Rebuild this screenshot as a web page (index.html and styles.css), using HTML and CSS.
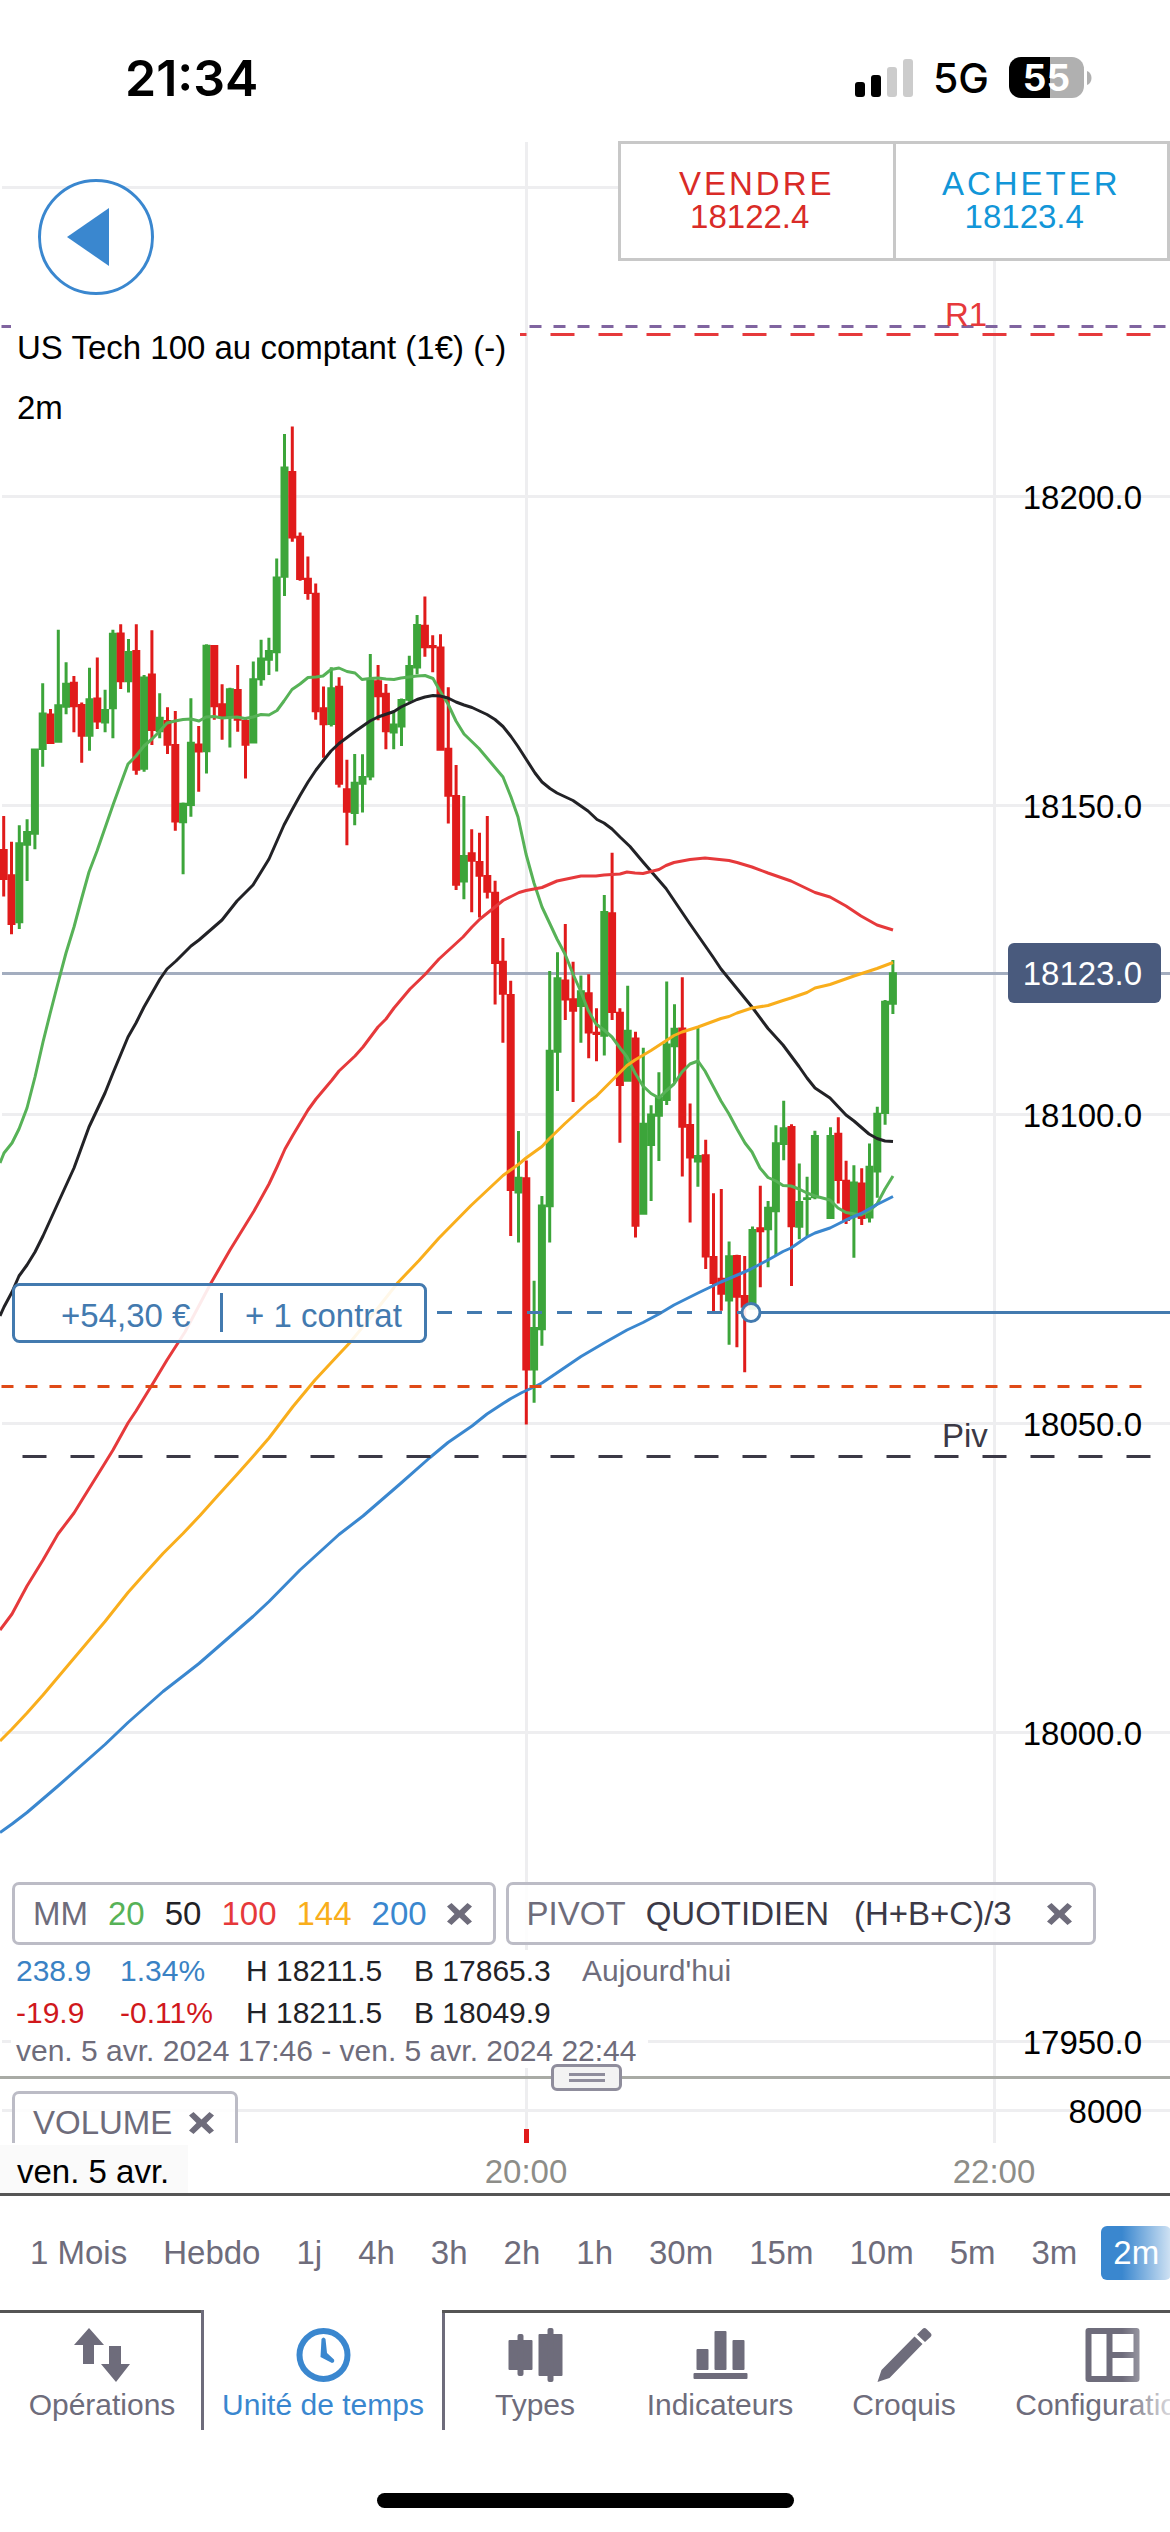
FILE: index.html
```html
<!DOCTYPE html>
<html lang="fr">
<head>
<meta charset="utf-8">
<meta name="viewport" content="width=device-width, initial-scale=1">
<title>US Tech 100 au comptant (1€)</title>
<link rel="stylesheet" href="styles.css">
</head>
<body>
<svg class="defs" aria-hidden="true">
  <symbol id="cross" viewBox="0 0 25 22"><path d="M0 3.500 4.500 0l8 7.500L20.500 0 25 3.500 17.500 11l7.500 7.500-4.500 3.500-8-7.500L4.500 22 0 18.500 7.500 11z"/></symbol>
</svg>
<div class="app">
  <header class="status">
    <span class="clock">21:34</span>
    <div class="status-right">
      <svg class="signal" viewBox="0 0 58 38" aria-hidden="true">
        <rect x="0" y="23" width="10" height="15" rx="3"/>
        <rect x="16" y="16" width="10" height="22" rx="3"/>
        <rect class="off" x="32" y="8" width="10" height="30" rx="3"/>
        <rect class="off" x="48" y="0" width="10" height="38" rx="3"/>
      </svg>
      <span class="network">5G</span>
      <span class="battery"><span class="battery-level">55</span><svg class="battery-cap" viewBox="0 0 5 14" aria-hidden="true"><path d="M0 0c6 2 6 12 0 14z"/></svg></span>
    </div>
  </header>

  <main>
    <section class="pane">
      <svg class="plot" viewBox="0 141 1170 1935" role="img" aria-label="Graphique en chandeliers, 2 minutes">
        <path class="grid" d="M2 187.500H1170M2 496.500H1170M2 805.500H1170M2 1114.500H1170M2 1423.500H1170M2 1732.500H1170M2 2041.500H1170M526.500 142V2076M994.500 142V2076"/>
        <path class="last-line" d="M2 973.500H1170"/>
        <g id="candles"></g>
        <path class="ma ma20" d="M0 1163 4 1153 12 1143 19 1129 27 1108 35 1077 43 1042 50 1014 58 983 66 953 74 927 81.500 899 89 872 97 851 105 828 113 805 121 783 128 764 136 756 144 746 152 739 160 731 167 723 175 721 183 719.500 191 719 199 721 206 717 214 716.500 222 718 237 717 245 718.500 253 717 261 714.500 269 715 277 710.500 284 701 292 689.500 300 684 308 677.500 316 677 323 676 331 669.500 339 668 347 671.500 355 673 362 679.500 370 678.500 378 678 386 679 394 679.500 401 678 417 676 425 675.500 433 678.500 440 691 448 704 456 721 464 734 479 748.500 487 758 503 777 511 797 518 817 526 854 534 883 542 907 550 924 557 939 565 954 573 974 581 992 588 1010 596 1024 604 1030 612 1037 620 1048 627 1057 635 1073 643 1086 651 1093.500 659 1098 666 1091 674 1084 682 1072 690 1064 698 1061 705 1071 721 1101 729 1114 737 1129 745 1143 752 1152 760 1168 768 1177.500 776 1181 783 1185.500 791 1186 799 1189 807 1193 815 1196 830 1200 838 1208 846 1212.500 861 1215 869 1211 877 1204 885 1189 893 1176"/>
        <path class="ma ma50" d="M0 1316 4 1307 12 1292 19 1276 27 1265 35 1252 43 1236 58 1203 74 1168 89 1127 105 1093 113 1073 128 1037 136 1023 144 1007 160 979 167 969 176 961 191 946 199 940 222 920 237 901 253 885 261 872 269 859 284 825 292 810 300 795.500 308 782 316 770 323 761 331 751 339 743.500 355 731.500 370 721 378 717 394 711.500 401 707 417 699.500 425 697 433 695.500 440 696 448 698 456 702 464 705 472 707.500 487 714.500 495 719.500 503 726.500 511 736.500 518 746.500 526 759 535 773 542 782 550 788.500 557 793 573 800.500 588 811 597 819.500 604 823 612 829 620 837 630 846.500 643 862 666 888.500 690 924 713 957 721 969 752 1007 768 1028.500 783 1045 799 1066.500 807 1078 815 1088 830 1098 846 1115 854 1121 869 1134 877 1138.500 885 1141 893 1141.500"/>
        <path class="ma ma100" d="M0 1630 12 1614 27 1586 43 1560 58 1534 74 1513 82 1500 105 1463 113 1450 128 1423 136 1411 155 1380 167 1360 185 1332 211 1283 230 1250 254 1211 269 1184 277 1167 285 1149 293 1135 308 1110 316 1099 332 1080 339 1071 355 1056 363 1047 378 1027 386 1019 394 1008 410 989 425 974.500 439 959 463 937 472 927 480 919 495 907 503 900.500 511 896.500 519 892.500 526 890.500 542 887.500 557 881 581 876 596 876 604 875 620 874 627 872 635 873 643 873.500 651 871.500 659 869.500 666 865.500 674 862.500 690 859.500 705 858 729 860.500 737 862.500 752 867 768 873 791 881 815 892.500 830 897 846 906 861 916 877 925 893 930"/>
        <path class="ma ma144" d="M0 1741 12 1729 27 1713 43 1695 67 1666.500 105 1621.500 128 1592.500 144 1574.500 163 1553.500 183 1533.500 200 1515.500 217 1496.500 237 1474.500 253 1456.500 269 1438 277 1427.500 293 1406.500 315 1380 335 1358.500 350 1342.500 370 1318 398 1282.500 419 1260.500 439 1238 471 1205.500 503 1175.500 519 1164 526 1158 542 1146.500 549 1139 565 1123.500 588 1102.500 596 1096.500 627 1065.500 635 1060 651 1050.500 674 1035.500 682 1032 698 1027 721 1018.500 729 1016.500 737 1013 752 1008 768 1005.500 783 1000.500 791 998 807 992.500 815 988 830 984.500 854 976 877 968.500 893 962.500"/>
        <path class="ma ma200" d="M0 1832.500 12 1824 27 1812.500 58 1786 105 1744.500 128 1722.500 163 1691.500 183 1676 199 1663.500 253 1616.500 269 1601.500 300 1570 317 1554.500 339 1534.500 363 1516 400 1484 430 1457.500 448 1442.500 472 1426 487 1414 503 1403.500 511 1398.500 522 1392.500 534 1387 542 1383 581 1356.500 604 1343 627 1330 643 1322.500 659 1314 674 1305 698 1293 721 1282 750 1269.500 768 1260 783 1251.500 791 1248 807 1237 815 1233 830 1228 846 1220 861 1213.500 877 1204.500 893 1196.500"/>
        <path class="pivot-r2" d="M1.500 326.500H1170"/>
        <path class="pivot-r1" d="M22.500 334.500H1152"/>
        <path class="stop-line" d="M1.500 1386.500H1152"/>
        <path class="pivot-p" d="M22.500 1456.500H1152"/>
        <text class="r1-label" x="945" y="326">R1</text>
        <text class="p-label" x="942" y="1447">Piv</text>
        <path class="position-line dashed" d="M437 1312.500H742"/>
        <path class="position-line" d="M760 1312.500H1170"/>
        <circle class="position-dot" cx="751" cy="1312.500" r="9"/>
        <rect class="position-box" x="13.500" y="1284.500" width="412" height="57" rx="6"/>
        <text class="position-text" x="61" y="1327">+54,30 €</text>
        <path class="position-line" d="M221.500 1293V1332"/>
        <text class="position-text" x="245" y="1327">+ 1 contrat</text>
        <g class="prices">
          <text x="1142" y="509">18200.0</text>
          <text x="1142" y="818">18150.0</text>
          <text x="1142" y="1127">18100.0</text>
          <text x="1142" y="1436">18050.0</text>
          <text x="1142" y="1745">18000.0</text>
          <text x="1142" y="2054">17950.0</text>
        </g>
        <rect class="last-tag" x="1008" y="943" width="153" height="60" rx="6"/>
        <text class="last-price" x="1142" y="985">18123.0</text>
      </svg>

      <div class="overlay">
        <div class="overlay-top">
          <button class="back" type="button" aria-label="Retour"><svg viewBox="0 0 42 58" aria-hidden="true"><path d="M0 29 42 0v58z"/></svg></button>
          <div class="quotes">
            <button class="quote sell" type="button"><span class="side">VENDRE</span><span class="value">18122.4</span></button>
            <button class="quote buy" type="button"><span class="side">ACHETER</span><span class="value">18123.4</span></button>
          </div>
        </div>
        <h1 class="title">US Tech 100 au comptant (1€) (-)</h1>
        <p class="interval">2m</p>

        <div class="legend">
          <div class="pill">
            <span>MM</span><span class="c20">20</span><span class="c50">50</span><span class="c100">100</span><span class="c144">144</span><span class="c200">200</span>
            <button class="close" type="button" aria-label="Supprimer MM"><svg viewBox="0 0 25 22"><use href="#cross"/></svg></button>
          </div>
          <div class="pill">
            <span>PIVOT</span><span class="strong">QUOTIDIEN</span><span class="strong formula">(H+B+C)/3</span>
            <button class="close" type="button" aria-label="Supprimer PIVOT"><svg viewBox="0 0 25 22"><use href="#cross"/></svg></button>
          </div>
        </div>
        <div class="stats up"><span class="change">238.9</span><span class="change">1.34%</span><span>H 18211.5</span><span>B 17865.3</span><span class="muted">Aujourd'hui</span></div>
        <div class="stats down"><span class="change">-19.9</span><span class="change">-0.11%</span><span>H 18211.5</span><span>B 18049.9</span></div>
        <p class="range">ven. 5 avr. 2024 17:46 - ven. 5 avr. 2024 22:44</p>
      </div>
    </section>

    <div class="splitter"><button class="handle" type="button" aria-label="Redimensionner"></button></div>

    <section class="pane volume">
      <svg class="plot" viewBox="0 2079 1170 64" role="img" aria-label="Volume">
        <path class="grid" d="M2 2110.500H1170M526.500 2079V2143M994.500 2079V2143"/>
        <path class="volume-bar" d="M524 2129h5v14h-5z"/>
        <g class="prices"><text x="1142" y="2123">8000</text></g>
      </svg>
      <div class="overlay volume-overlay">
        <div class="pill"><span>VOLUME</span>
          <button class="close" type="button" aria-label="Supprimer VOLUME"><svg viewBox="0 0 25 22"><use href="#cross"/></svg></button>
        </div>
      </div>
    </section>

    <svg class="axis" viewBox="0 0 1170 50" role="img" aria-label="Axe du temps">
      <rect class="day-box" x="0" y="2" width="188" height="48"/>
      <text class="day" x="17" y="40">ven. 5 avr.</text>
      <text class="hour" x="526" y="40">20:00</text>
      <text class="hour" x="994" y="40">22:00</text>
    </svg>
  </main>

  <div class="intervals">
    <button type="button">1 Mois</button><button type="button">Hebdo</button><button type="button">1j</button><button type="button">4h</button><button type="button">3h</button><button type="button">2h</button><button type="button">1h</button><button type="button">30m</button><button type="button">15m</button><button type="button">10m</button><button type="button">5m</button><button type="button">3m</button><button type="button" class="selected">2m</button>
  </div>

  <nav class="tabs">
    <button type="button" class="tab"><svg viewBox="0 0 57 54"><path d="M15 0 30 17H20V36H9V17H0zM35 18H47V36H56L42 54 27 36H35z"/></svg><span>Opérations</span></button>
    <button type="button" class="tab current"><svg viewBox="0 0 54 54"><circle class="ring" cx="27" cy="27" r="24"/><path d="M25 11q2-3 4 0l1.500 14 7 6.500q1 3-2 3.500L24 29z"/></svg><span>Unité de temps</span></button>
    <button type="button" class="tab"><svg viewBox="0 0 54 54"><rect y="12" width="24" height="30" rx="1"/><rect x="9" y="6" width="6" height="42" rx="2"/><rect x="30" y="6" width="24" height="42" rx="1"/><rect x="39" width="6" height="54" rx="2"/></svg><span>Types</span></button>
    <button type="button" class="tab"><svg viewBox="0 0 54 54"><rect x="3" y="21" width="12" height="21" rx="1"/><rect x="21" y="3" width="12" height="39" rx="1"/><rect x="39" y="12" width="12" height="30" rx="1"/><rect y="45" width="54" height="6" rx="1"/></svg><span>Indicateurs</span></button>
    <button type="button" class="tab"><svg viewBox="0 0 54 54"><path d="M0 54 4 42 37 8.500 45 16 12 50zM39.500 6.500 45 1q2-2 4 0l4 4q2 2 0 4l-5.500 5z"/></svg><span>Croquis</span></button>
    <button type="button" class="tab"><svg viewBox="0 0 54 54"><path fill-rule="evenodd" d="M3 0H51q3 0 3 3V51q0 3-3 3H3q-3 0-3-3V3q0-3 3-3zM6 6V48H21V6zM27 6V24H48V6zM27 30V48H48V30z"/></svg><span>Configurations</span></button>
  </nav>
  <div class="home"></div>
</div>
<script src="candles.js"></script>
</body>
</html>
```
FILE: styles.css
```css
*, *::before, *::after { box-sizing: border-box; }
body {
  margin: 0;
  background: #fff;
  color: #000;
  font-family: "Liberation Sans", Arial, sans-serif;
  font-size: 33px;
}
button { border: 0; padding: 0; background: none; color: inherit; font: inherit; cursor: pointer; }
h1, p { margin: 0; font-size: inherit; font-weight: normal; }
svg { display: block; }
.defs { position: absolute; width: 0; height: 0; }
.app { overflow: hidden; }

/* Status bar */
.status {
  display: flex;
  justify-content: space-between;
  align-items: center;
  height: 141px;
  padding: 14px 78px 0 125px;
  font-family: Inter, sans-serif;
}
.clock { font-size: 50px; font-weight: 600; }
.status-right { display: flex; align-items: center; gap: 20px; }
.signal { width: 58px; height: 38px; }
.signal .off { fill: #ccc; }
.network { font-size: 41px; font-weight: 500; }
.battery { display: flex; align-items: center; gap: 3px; }
.battery-level {
  width: 75px;
  border-radius: 12px;
  background: linear-gradient(90deg, #000 55%, #b0b0b0 55%);
  color: #fff;
  font-size: 37px;
  font-weight: 700;
  line-height: 41px;
  text-align: center;
}
.battery-cap { width: 5px; height: 14px; fill: #b0b0b0; }

/* Chart panes: the plot and its overlay share one grid cell */
.pane { display: grid; }
.pane > * { grid-area: 1 / 1; min-width: 0; }
.plot, .axis { width: 100%; height: auto; }
.plot text, .axis text { font-size: 33px; }
.grid { stroke: #eeeef0; stroke-width: 3; }
.last-line { stroke: #a3adbf; stroke-width: 3; }
.up-candle { fill: #3ca53a; }
.down-candle { fill: #e01b1b; }
.ma { fill: none; stroke-width: 3; stroke-linejoin: round; }
.ma20 { stroke: #57b257; }
.ma50 { stroke: #222226; }
.ma100 { stroke: #e6393b; }
.ma144 { stroke: #f9ae1c; }
.ma200 { stroke: #3a87cf; }
.pivot-r2, .pivot-r1, .stop-line, .pivot-p { stroke-width: 3; }
.pivot-r2 { stroke: #8064a0; stroke-dasharray: 12 12; }
.pivot-r1 { stroke: #e6393b; stroke-dasharray: 24 24; }
.stop-line { stroke: #df4a17; stroke-dasharray: 12 12; }
.pivot-p { stroke: #3b3946; stroke-dasharray: 24 24; }
.r1-label { fill: #e6393b; }
.p-label { fill: #3b3946; }
.position-line { stroke: #437aaf; stroke-width: 3; }
.position-line.dashed { stroke-dasharray: 15 15; }
.position-dot, .position-box { fill: #fff; fill-opacity: .9; stroke: #437aaf; stroke-width: 3; }
.position-text { fill: #437aaf; }
.prices text, .last-price { text-anchor: end; }
.last-tag { fill: #495a7d; }
.last-price { fill: #fff; }

.overlay { display: flex; flex-direction: column; align-items: flex-start; padding-bottom: 8px; }
.overlay-top { display: flex; justify-content: space-between; align-items: flex-start; align-self: stretch; }
.back {
  display: flex;
  align-items: center;
  width: 116px;
  height: 116px;
  margin: 38px 0 0 38px;
  padding-left: 26px;
  border: 3px solid #3a87cf;
  border-radius: 50%;
  background: #fff;
}
.back svg { width: 42px; height: 58px; fill: #3a87cf; }
.quotes { display: flex; width: 552px; border: 3px solid #c8c8c8; background: #fff; }
.quote { flex: 1; padding: 23px 0 25px; line-height: 33px; text-align: center; }
.quote + .quote { border-left: 3px solid #c8c8c8; }
.quote span { display: block; }
.side { letter-spacing: 3px; }
.value { padding-right: 14px; }
.sell { color: #d92b27; }
.buy { color: #1296d8; }
.title, .interval { margin-left: 11px; padding: 0 14px 0 6px; background: #fff; line-height: 60px; }
.title { margin-top: 23px; }

.legend { display: flex; gap: 10px; margin: auto 0 5px 12px; }
.pill {
  display: flex;
  align-items: center;
  gap: 20px;
  padding: 0 21px 0 18px;
  border: 3px solid #bcbcc6;
  border-radius: 7px;
  background: rgba(255, 255, 255, .85);
  color: #6e6c7b;
  line-height: 57px;
}
.close svg { width: 25px; height: 22px; fill: #6e6c7b; }
.c20 { color: #57b257; }
.c50 { color: #222226; }
.c100 { color: #e6393b; }
.c144 { color: #f9ae1c; }
.c200 { color: #3a87cf; }
.strong { color: #3b3946; }
.formula { padding: 0 15px 0 5px; }
.stats {
  display: grid;
  grid-template-columns: 104px 126px 168px 168px auto;
  margin-left: 11px;
  padding: 0 5px;
  background: #fff;
  color: #222226;
  font-size: 30px;
  line-height: 42px;
}
.up .change { color: #3a82c4; }
.down .change { color: #d0181c; }
.muted, .range { color: #6e6c7b; }
.range { margin-left: 11px; padding: 0 12px 0 5px; background: #fff; font-size: 30px; line-height: 34px; }

.splitter { position: relative; height: 3px; background: #a9aba5; }
.handle {
  position: absolute;
  z-index: 1;
  top: -12px;
  left: 551px;
  width: 71px;
  height: 27px;
  border: 3px solid #8f8d9c;
  border-radius: 6px;
  background: #f3f3f3;
}
.handle::before {
  content: "";
  display: block;
  width: 36px;
  height: 9px;
  margin: 0 auto;
  border: solid #8f8d9c;
  border-width: 3px 0;
}
.volume { overflow: hidden; }
.volume-bar { fill: #e01b1b; }
.volume-overlay { height: 0; padding: 12px 0 0 12px; }
.volume-overlay .pill { gap: 17px; }
.day-box { fill: #fafafa; }
.hour { fill: #8d8d88; text-anchor: middle; }

/* Interval strip */
.intervals {
  position: relative;
  display: flex;
  gap: 12px;
  padding: 30px 18px;
  border-top: 3px solid #555;
  overflow: hidden;
  color: #6e6c7b;
}
.intervals button { flex: none; padding: 0 12px; border-radius: 6px; line-height: 54px; white-space: nowrap; }
.intervals .selected { background: #3a87cf; color: #fff; }
.intervals::after, .tabs::after {
  content: "";
  position: absolute;
  top: 0;
  right: 0;
  bottom: 0;
  width: 48px;
  background: linear-gradient(90deg, rgba(255, 255, 255, 0), rgba(255, 255, 255, .75));
}
.tabs::after { top: 3px; }

/* Bottom tabs */
.tabs {
  position: relative;
  display: grid;
  grid-template-columns: 204px 238px 186px 184px 184px 232px;
  overflow: hidden;
  color: #6e6c7b;
}
.tab {
  display: flex;
  flex-direction: column;
  align-items: center;
  gap: 5px;
  height: 120px;
  padding-top: 15px;
  border-top: 3px solid #555;
  font-size: 30px;
  line-height: 36px;
}
.tab svg { width: 57px; height: 54px; fill: #6e6c7b; }
.tab.current {
  border-top-color: transparent;
  box-shadow: -3px 0 #6e6c7b, 3px 0 #6e6c7b;
  color: #3a87cf;
}
.current svg { fill: #3a87cf; }
.current .ring { fill: none; stroke: #3a87cf; stroke-width: 6; }
.home { width: 417px; height: 15px; margin: 63px auto 24px; border-radius: 8px; background: #000; }
```
FILE: candles.js
```js
// Each block: first bar index, y origin, units per pixel, then bars as
// [direction, high, body top, body bottom, low]. A null bar had no trades.
const U = "up-candle", D = "down-candle";
const blocks = [
  { first: 0, origin: 400, units: 2.8, bars: [
    [D,1165,1257,1344,1390],[D,1237,1328,1470,1496],[U,1191,1238,1465,1481],[U,1174,1207,1248,1347],
    [U,976,976,1217,1258],[U,793,875,980,1027],[D,865,878,963,963],[U,643,852,960,960],
    [U,734,792,862,880],[D,773,789,860,930],[D,847,851,943,1016],[U,750,835,943,982],
    [D,721,833,903,921],[U,811,865,906,930],[U,643,652,866,947],[D,628,651,790,809],
    [U,669,703,790,819],[D,628,700,1038,1049],[U,770,774,1035,1041],[D,645,766,927,966],
    [U,821,887,930,947],[D,860,896,968,991],[D,871,963,1183,1206],[U,1127,1128,1185,1328],
    [U,835,957,1137,1167],[D,913,962,987,1097],[U,684,685,986,1046],[D,686,686,860,895],
    [D,796,849,889,951],[U,806,807,888,973],[D,742,809,898,929],[D,892,895,968,1060],
    [U,732,779,962,962],[U,671,721,785,800],[U,666,700,730,770],[U,444,494,709,760],
    [U,95,186,498,549],[D,74,199,388,397],[D,371,380,504,506],[D,438,498,543,559],
    [D,514,540,874,895],[D,802,860,911,1002],[U,748,804,910,914],[D,776,800,1077,1085],
    [D,1007,1087,1156,1247],[U,991,1069,1159,1191],[U,992,1053,1077,1155],[U,711,782,1057,1065],
    [D,742,785,832,897],[D,795,820,930,978],[U,870,906,934,978],[U,836,837,917,969],
    [U,716,742,842,845],[U,602,627,752,768],[D,550,629,695,719],[D,659,686,695,762],
    [D,656,690,982,982],[D,804,974,1111,1186],[D,1022,1106,1360,1372],[U,1109,1274,1351,1398],
    [D,1202,1266,1293,1434],[D,1212,1291,1335,1449],[D,1165,1330,1380,1396]
  ] },
  { first: 63, origin: 800, units: 2.45, bars: [
    [D,198,225,402,501],[D,338,394,477,595],[D,443,475,958,1068],[U,811,923,964,1084],
    [D,883,924,1398,1530],[U,1178,1291,1398,1477],[U,970,991,1299,1337],[U,419,612,998,1084],
    [U,373,434,619,713],[D,304,440,491,539],[D,396,486,519,740],[U,430,466,507,595],
    [D,427,471,572,633],[D,510,568,576,640],[U,233,272,580,626],[D,129,275,522,539],
    [D,510,519,701,840],[U,455,563,690,690]
  ] },
  { first: 81, origin: 840, units: 2.8, bars: [
    [D,537,553,1083,1113],[U,582,792,1049,1049],[U,743,766,857,1011],[U,650,718,775,899],
    [U,396,570,731,742],[U,460,526,580,683],[D,384,525,806,942],[D,738,795,892,1071],
    [U,525,882,903,971],[D,839,880,1169,1201],[D,989,1165,1243,1321],[D,977,1226,1273,1318],
    [U,1124,1163,1292,1413],[D,1161,1162,1282,1420],[D,1165,1274,1310,1490],[U,1082,1089,1315,1315],
    [D,968,1084,1098,1252],[U,1011,1027,1093,1196],[U,799,846,1042,1165],[U,730,804,854,897],
    [D,796,801,1084,1249],[U,906,1011,1086,1118],[U,943,1000,1008,1110],[U,814,826,1003,1006],
    null,
    [U,804,826,1061,1061],[D,776,820,955,1018],[D,898,951,1067,1075],[U,911,956,1057,1170],
    [D,919,959,1061,1078],[U,850,912,1060,1071],[U,747,764,931,1002],[U,448,450,767,797],
    [U,336,370,461,487]
  ] }
];

const STEP = 7.8, START = 3.7;
const group = document.getElementById("candles");

for (const { first, origin, units, bars } of blocks) {
  bars.forEach((bar, i) => {
    if (!bar) return;
    const x = START + (first + i) * STEP;
    const [cls, high, top, bottom, low] = bar;
    const [h, t, b, l] = [high, top, bottom, low].map(v => origin + v / units);
    const path = document.createElementNS("http://www.w3.org/2000/svg", "path");
    path.setAttribute("class", cls);
    path.setAttribute("d", `M${x - 1.5} ${h}h3V${l}h-3zM${x - 4} ${t}h8V${b}h-8z`);
    group.append(path);
  });
}
```
